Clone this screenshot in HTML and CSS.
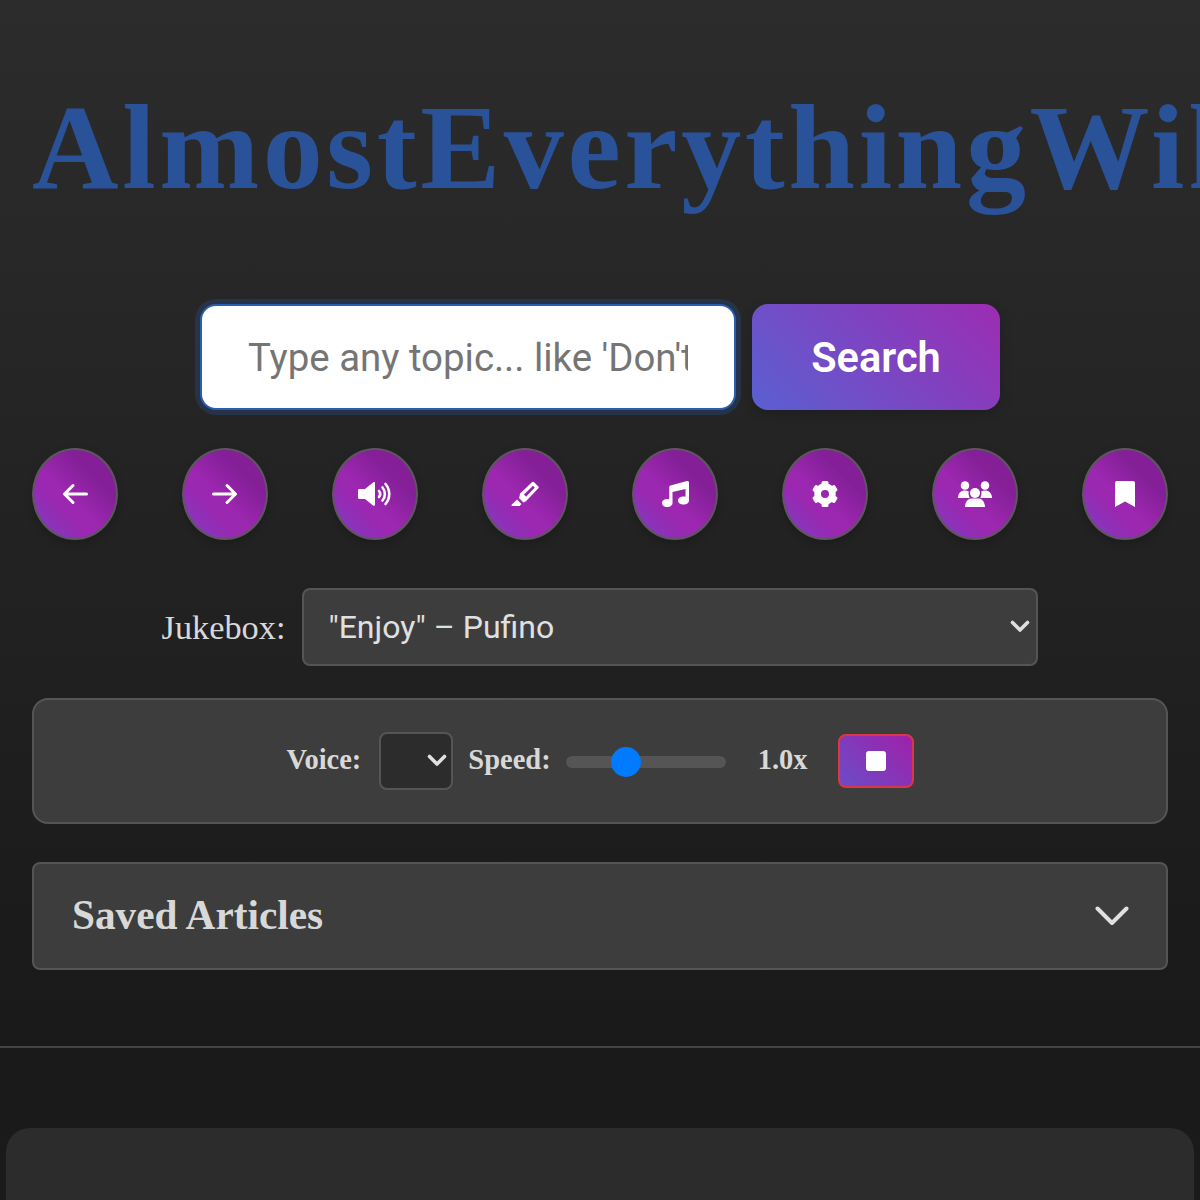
FILE: index.html
```html
<!DOCTYPE html>
<html lang="en">
<head>
    <meta charset="UTF-8">
    <meta name="viewport" content="width=device-width, initial-scale=1.0">
    <title>AlmostEverythingWiki</title>
    <link rel="stylesheet" href="styles.css">
</head>
<body>
    <div class="page">
        <h1 class="title">AlmostEverythingWiki</h1>

        <div class="search-row">
            <input class="search-input" type="text" placeholder="Type any topic... like 'Don't Stop Believin'">
            <button class="search-button">Search</button>
        </div>

        <div class="icon-row">
            <button class="icon-button" title="Back">
                <svg class="icon-arrow" viewBox="0 0 26 22"><path d="M24.500 11H2.500M11 2.500 2.500 11l8.500 8.500" fill="none" stroke="#fff" stroke-width="3" stroke-linecap="round" stroke-linejoin="round"/></svg>
            </button>
            <button class="icon-button" title="Forward">
                <svg class="icon-arrow" viewBox="0 0 26 22"><path d="M1.500 11h22M15 2.500l8.500 8.500-8.500 8.500" fill="none" stroke="#fff" stroke-width="3" stroke-linecap="round" stroke-linejoin="round"/></svg>
            </button>
            <button class="icon-button" title="Read aloud">
                <svg viewBox="0 0 34 26"><path d="M1.500 8H7l8-6.500C16 .7 17 1.200 17 2.500v21c0 1.300-1 1.800-2 1L7 18H1.500C.6 18 0 17.400 0 16.500v-7C0 8.600.6 8 1.500 8z" fill="#fff"/><path d="M21 10c1.500 1.800 1.500 4.200 0 6M24.500 6.500c3.200 3.800 3.200 9.200 0 13M27.500 3c5 6 5 14 0 20" fill="none" stroke="#fff" stroke-width="2.600" stroke-linecap="round"/></svg>
            </button>
            <button class="icon-button" title="Highlight">
                <svg viewBox="0 0 28 26"><path d="M10.500 13.500 22 2.500l4 4L15 18z" fill="none" stroke="#fff" stroke-width="3.200" stroke-linejoin="round"/><path d="M9 13.500l6.500 6.500-3 1.500-4.500-4.500zM6 18.500l4.500 4.500-2 2H1.500C.5 25 .2 24 .8 23.400z" fill="#fff"/></svg>
            </button>
            <button class="icon-button" title="Jukebox">
                <svg viewBox="0 0 27 26"><path d="M27 1.500v18c0 2.500-2.500 4-5.500 4s-5.500-1.500-5.500-4 2.500-4 5.500-4c.7 0 1.300.1 2 .3V8l-13 3v11c0 2.500-2.500 4-5.250 4S0 24.500 0 22s2.500-4 5.250-4c.7 0 1.300.1 2 .3V6c0-.8.500-1.400 1.200-1.600L25 .1c1-.3 2 .4 2 1.400z" fill="#fff"/></svg>
            </button>
            <button class="icon-button" title="Settings">
                <svg viewBox="0 0 24 24"><circle cx="12" cy="12" r="6.800" fill="none" stroke="#fff" stroke-width="6.200"/><g fill="#fff"><rect x="8.800" y="0" width="6.400" height="6" rx="1.500"/><rect x="8.800" y="18" width="6.400" height="6" rx="1.500"/><rect x="8.800" y="0" width="6.400" height="6" rx="1.500" transform="rotate(60 12 12)"/><rect x="8.800" y="0" width="6.400" height="6" rx="1.500" transform="rotate(120 12 12)"/><rect x="8.800" y="0" width="6.400" height="6" rx="1.500" transform="rotate(240 12 12)"/><rect x="8.800" y="0" width="6.400" height="6" rx="1.500" transform="rotate(300 12 12)"/></g></svg>
            </button>
            <button class="icon-button" title="Community">
                <svg viewBox="0 0 34 26"><g fill="#fff"><circle cx="7" cy="4.500" r="4.300"/><circle cx="27" cy="4.500" r="4.300"/><circle cx="17" cy="12" r="5"/><path d="M0 17C0 12 3 9.500 7 9.500c1.500 0 2.800.4 3.800 1-.5 1.800-.3 4 1 6.500zM34 17c0-5-3-7.500-7-7.500-1.500 0-2.800.4-3.800 1 .5 1.800.3 4-1 6.500zM7 26c0-5 3-8 6-8.500h8c3 .5 6 3.500 6 8.500z"/></g></svg>
            </button>
            <button class="icon-button" title="Saved">
                <svg viewBox="0 0 20 26"><path d="M0 2C0 .9.900 0 2 0h16c1.100 0 2 .9 2 2v24l-10-5.500L0 26z" fill="#fff"/></svg>
            </button>
        </div>

        <div class="jukebox-row">
            <label class="jukebox-label" for="jukebox">Jukebox:</label>
            <select class="jukebox-select" id="jukebox">
                <option>"Enjoy" – Pufino</option>
            </select>
        </div>

        <div class="voice-panel">
            <label class="voice-label" for="voice">Voice:</label>
            <select class="voice-select" id="voice"></select>
            <label class="voice-label" for="speed">Speed:</label>
            <input class="speed-slider" id="speed" type="range" min="0.5" max="2" step="0.01" value="1.02">
            <span class="speed-value">1.0x</span>
            <button class="stop-button" title="Stop"><span class="stop-square"></span></button>
        </div>

        <div class="saved-panel">
            <h2 class="saved-title">Saved Articles</h2>
            <svg class="saved-chevron" viewBox="0 0 34 20"><path d="M2.500 2.500 17 17 31.500 2.500" fill="none" stroke="#e0e0e0" stroke-width="4" stroke-linecap="round" stroke-linejoin="round"/></svg>
        </div>
    </div>

    <hr class="divider">

    <div class="bottom-card"></div>
</body>
</html>
```

FILE: styles.css
```css
* {
    box-sizing: border-box;
}
html, body {
    height: 1200px;
    overflow: hidden;
}
body {
    margin: 0;
    padding: 0;
    font-family: "Liberation Serif", serif;
    background: linear-gradient(to bottom, #2c2c2c, #1a1a1a 1000px);
    color: #e0e0e0;
}
.page {
    padding: 0 32px;
}
.title {
    margin: 0;
    padding-top: 80px;
    height: 304px;
    font-size: 120px;
    line-height: 136px;
    letter-spacing: 3.6px;
    font-weight: 700;
    color: #2a5298;
    white-space: nowrap;
}
.search-row {
    display: flex;
    justify-content: center;
    gap: 16px;
    height: 106px;
}
.search-input {
    width: 536px;
    height: 106px;
    padding: 0 46px;
    border: 2px solid #2a5fb0;
    border-radius: 16px;
    background: #fff;
    font-family: Roboto, sans-serif;
    font-size: 38.4px;
    box-shadow: 0 0 0 5px rgba(42, 82, 152, 0.3);
    outline: none;
}
.search-input::placeholder {
    color: #757575;
}
.search-button {
    width: 248px;
    border: none;
    border-radius: 16px;
    background: linear-gradient(45deg, #5a60d2, #9c2cb2);
    color: #fff;
    font-family: Roboto, sans-serif;
    font-size: 41.6px;
    font-weight: 600;
    box-shadow: 0 4px 12px rgba(0, 0, 0, 0.2);
}
.icon-row {
    display: flex;
    justify-content: space-between;
    margin-top: 38px;
}
.icon-button {
    display: flex;
    align-items: center;
    justify-content: center;
    width: 86px;
    height: 92px;
    padding: 0;
    border: 2px solid #5f5560;
    border-radius: 50%;
    background: linear-gradient(45deg, #7d3cc0 5%, #9c27b0 35%, #9c27b0 45%, #841f98 72%);
    box-shadow: 0 4px 10px rgba(0, 0, 0, 0.2);
}
.icon-button svg {
    flex: none;
    height: 26px;
}
.icon-button svg.icon-arrow {
    height: 22px;
}
.jukebox-row {
    display: flex;
    justify-content: center;
    align-items: center;
    gap: 17px;
    margin-top: 48px;
}
.jukebox-label {
    font-size: 34.3px;
    color: #d8d8d8;
}
.jukebox-select, .voice-select {
    -webkit-appearance: none;
    appearance: none;
    background-image: url("data:image/svg+xml,%3Csvg xmlns='http://www.w3.org/2000/svg' viewBox='0 0 20 14'%3E%3Cpath d='M2.500 2.500 10 10l7.500-7.500' fill='none' stroke='%23e0e0e0' stroke-width='3.600' stroke-linecap='round' stroke-linejoin='round'/%3E%3C/svg%3E");
    background-repeat: no-repeat;
    background-size: 20px 14px;
}
.jukebox-select {
    width: 736px;
    height: 78px;
    padding: 0 24px;
    border: 2px solid #555;
    border-radius: 8px;
    background-color: #3d3d3d;
    background-position: right 6px center;
    color: #e0e0e0;
    font-family: Roboto, sans-serif;
    font-size: 32px;
}
.voice-panel {
    display: flex;
    justify-content: center;
    align-items: center;
    gap: 16px;
    height: 126px;
    margin-top: 32px;
    border: 2px solid #555;
    border-radius: 16px;
    background: #3d3d3d;
}
.voice-label {
    margin-bottom: 3px;
    font-size: 28.5px;
    font-weight: 700;
    color: #d8d8d8;
}
.voice-select {
    width: 74px;
    height: 58px;
    margin: 0 -1px 0 2px;
    border: 2px solid #555;
    border-radius: 8px;
    background-color: #2c2c2c;
    background-position: right 4px center;
}
.speed-slider {
    -webkit-appearance: none;
    appearance: none;
    width: 160px;
    height: 12px;
    margin: 2px 0 0 -1px;
    border-radius: 6px;
    background: #555;
}
.speed-slider::-webkit-slider-thumb {
    -webkit-appearance: none;
    width: 30px;
    height: 30px;
    border-radius: 50%;
    background: #007bff;
}
.speed-value {
    margin: 0 0 3px 16px;
    font-size: 28.5px;
    font-weight: 700;
    color: #d8d8d8;
}
.stop-button {
    display: flex;
    align-items: center;
    justify-content: center;
    width: 76px;
    height: 54px;
    margin-left: 14px;
    padding: 0;
    border: 2px solid #dc3545;
    border-radius: 8px;
    background: linear-gradient(45deg, #6a4cc8, #a020a8);
}
.stop-square {
    width: 20px;
    height: 20px;
    border-radius: 3px;
    background: #fff;
}
.saved-panel {
    display: flex;
    justify-content: space-between;
    align-items: center;
    height: 108px;
    margin-top: 38px;
    padding: 0 37px 0 38px;
    border: 2px solid #555;
    border-radius: 8px;
    background: #3d3d3d;
}
.saved-title {
    margin: 0 0 3px;
    font-size: 41.3px;
    font-weight: 700;
    color: #d8d8d8;
}
.saved-chevron {
    width: 34px;
    height: 20px;
}
.divider {
    height: 2px;
    margin: 76px 0 0;
    border: none;
    background: #444;
}
.bottom-card {
    height: 200px;
    margin: 80px 6px 0;
    border-radius: 24px;
    background: #2c2c2c;
}
```
